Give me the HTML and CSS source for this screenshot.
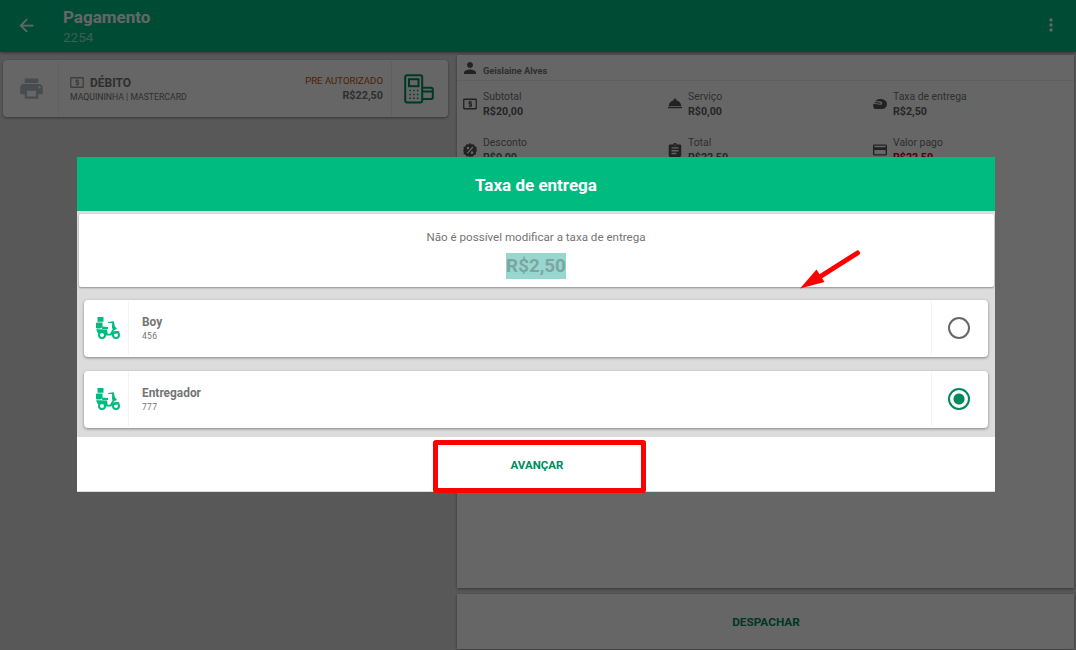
FILE: index.html
```html
<!DOCTYPE html>
<html lang="pt-BR">
<head>
	<meta charset="UTF-8">
	<title>Pagamento</title>
	<link rel="stylesheet" href="styles.css">
</head>
<body>
	<svg class="defs">
		<symbol id="money" viewBox="0 0 28 22">
			<rect x="1.5" y="1.5" width="25" height="19" rx="1" fill="none" stroke="currentColor" stroke-width="2.6"/>
			<path d="M17.5 7.2h-5v3.6h4.2v3.8h-5M14.3 4.6v3M14.3 14.4v3" fill="none" stroke="currentColor" stroke-width="2.6"/>
		</symbol>
		<symbol id="moto" viewBox="0 0 24 22">
			<path d="M1.500 0h6v4.800h-6zM.5 5.600h6v4.600L4 11.500H.5zM0 6h1v5H0zM6.500 9.500l5.500.6v1.800H6zM12.200 5l5.500-.8v1.600l-5.500.3zM16.200 4.500h1.800l.7 4.500 2.300 3-3.500 1.500-1.500-2.500z"/>
			<path d="M0 12.200h3l8 .3.7 4.300h2.300l2.500-4.500 1.500 1-2.500 5.200H9L7.500 15.500 2 16.500z"/>
			<circle cx="6" cy="18" r="3" fill="none" stroke="currentColor" stroke-width="2"/>
			<circle cx="20" cy="18" r="3" fill="none" stroke="currentColor" stroke-width="2"/>
			<path d="M15.800 17q2-4.500 8-2.500l-3.300 2.300z"/>
		</symbol>
	</svg>
	<div class="topo">
		<svg class="voltar" viewBox="0 0 24 24"><path d="M20 11H7.830l5.590-5.590L12 4l-8 8 8 8 1.410-1.410L7.830 13H20v-2z"/></svg>
		<div class="titulo">
			<h1>Pagamento</h1>
			<p>2254</p>
		</div>
		<svg class="menu" viewBox="0 0 24 24"><path d="M12 8c1.100 0 2-.9 2-2s-.9-2-2-2-2 .9-2 2 .9 2 2 2zm0 2c-1.100 0-2 .9-2 2s.9 2 2 2 2-.9 2-2-.9-2-2-2zm0 6c-1.100 0-2 .9-2 2s.9 2 2 2 2-.9 2-2-.9-2-2-2z"/></svg>
	</div>
	<div class="conteudo">
		<div class="esquerda">
			<div class="cartao pagamento">
				<div class="impressora">
					<svg viewBox="0 0 24 24"><path d="M19 8H5c-1.660 0-3 1.340-3 3v6h4v4h12v-4h4v-6c0-1.660-1.340-3-3-3zm-3 11H8v-5h8v5zm3-7c-.55 0-1-.45-1-1s.45-1 1-1 1 .45 1 1-.45 1-1 1zm-1-9H6v4h12V3z"/></svg>
				</div>
				<div class="forma">
					<h2><svg><use href="#money"/></svg>DÉBITO</h2>
					<p>MAQUININHA | MASTERCARD</p>
				</div>
				<div class="valor">
					<p>PRE AUTORIZADO</p>
					<b>R$22,50</b>
				</div>
				<div class="maquina">
					<svg viewBox="0 0 30 30">
						<rect x="1.200" y="1.200" width="17" height="27.400" rx="2"/>
						<rect x="5" y="5.200" width="9.500" height="7"/>
						<path d="M5.500 16.500h9M5.500 20.500h9M5.500 24.300h9" stroke-width="1.500" stroke-dasharray="1.500 2.200"/>
						<path d="M18 13.800h9q1.800 0 1.800 1.800v7.600q0 1.800-1.800 1.800h-9M18 17.500h11"/>
					</svg>
				</div>
			</div>
		</div>
		<div class="direita">
			<div class="painel">
				<div class="cliente">
					<svg viewBox="4 4 16 16"><path d="M12 12c2.210 0 4-1.790 4-4s-1.790-4-4-4-4 1.790-4 4 1.790 4 4 4zm0 2c-2.670 0-8 1.340-8 4v2h16v-2c0-2.660-5.330-4-8-4z"/></svg>
					<b>Geislaine Alves</b>
				</div>
				<div class="resumo">
					<div class="item">
						<svg class="nota"><use href="#money"/></svg>
						<div><p>Subtotal</p><b>R$20,00</b></div>
					</div>
					<div class="item">
						<svg viewBox="2 3 20 20"><path d="M2 17h20v2H2zm11.840-9.210c.1-.24.160-.51.160-.79 0-1.100-.9-2-2-2s-2 .9-2 2c0 .28.060.55.160.79C6.250 8.600 3.270 11.930 3 16h18c-.27-4.070-3.250-7.400-7.160-8.210z"/></svg>
						<div><p>Serviço</p><b>R$0,00</b></div>
					</div>
					<div class="item">
						<svg viewBox="1 1 22 22"><path d="M12 4c-3 0-5.500 1.300-6.800 3.500H11c2.500 0 4.500 1.300 4.500 3.300 0 1.500-1.200 2.500-2.800 2.500L1.500 11.500C1 15 1.500 17 2 18c.5 1.300 1.500 2 3 2h10c4.500 0 8-3.500 8-8s-4-8-11-8zM4.200 9l-.8 1.500 8.600 1.300c1.500.2 1.500-1.900-1-2.300z"/></svg>
						<div><p>Taxa de entrega</p><b>R$2,50</b></div>
					</div>
					<div class="item">
						<svg viewBox="0 0 24 24"><path fill-rule="evenodd" d="M12 0l3 2.400 3.800-.4 1.100 3.600L23.400 7l-.4 3.700 1 2.300-1.900 3 .1 3.600-3.600 1-1.600 2.900-3.600-.5L12 24l-2.700-1.300-3.600.6-1.400-3-3.400-1.200.5-3.500L0 13l1.500-2.500L1 7l3.400-1.400L5.500 2l3.600.4zM8.500 6.500a2.200 2.200 0 100 4.400 2.200 2.200 0 000-4.400zm7 7.800a2.200 2.200 0 100 4.400 2.200 2.200 0 000-4.400zM16 6L6.500 17 8 18.500 17.800 7.800z"/></svg>
						<div><p>Desconto</p><b>R$0,00</b></div>
					</div>
					<div class="item">
						<svg viewBox="2 1 20 20"><path d="M19 3h-4.180C14.400 1.840 13.300 1 12 1c-1.300 0-2.400.84-2.820 2H5c-1.100 0-2 .9-2 2v14c0 1.100.9 2 2 2h14c1.100 0 2-.9 2-2V5c0-1.100-.9-2-2-2zm-7 0c.55 0 1 .45 1 1s-.45 1-1 1-1-.45-1-1 .45-1 1-1zm2 14H7v-2h7v2zm3-4H7v-2h10v2zm0-4H7V7h10v2z"/></svg>
						<div><p>Total</p><b>R$22,50</b></div>
					</div>
					<div class="item pago">
						<svg viewBox="2 2 20 20"><path d="M20 4H4c-1.110 0-1.990.89-1.990 2L2 18c0 1.110.89 2 2 2h16c1.110 0 2-.89 2-2V6c0-1.110-.89-2-2-2zm0 14H4v-6h16v6zm0-10H4V6h16v2z"/></svg>
						<div><p>Valor pago</p><b>R$22,50</b></div>
					</div>
				</div>
			</div>
			<div class="despachar">DESPACHAR</div>
		</div>
	</div>

	<div class="fundo">
		<div class="modal">
			<div class="modal-topo">Taxa de entrega</div>
			<div class="aviso">
				<p>Não é possível modificar a taxa de entrega</p>
				<span>R$2,50</span>
			</div>
			<div class="lista">
				<div class="cartao entregador">
					<div class="moto"><svg><use href="#moto"/></svg></div>
					<div class="nome"><b>Boy</b><p>456</p></div>
					<div class="opcao"><i class="radio"></i></div>
				</div>
				<div class="cartao entregador">
					<div class="moto"><svg><use href="#moto"/></svg></div>
					<div class="nome"><b>Entregador</b><p>777</p></div>
					<div class="opcao"><i class="radio marcado"></i></div>
				</div>
			</div>
			<div class="avancar">AVANÇAR</div>
			<div class="destaque"></div>
			<svg class="seta" viewBox="0 0 60 40"><path d="M57.500 3L18 28" stroke="#f00" stroke-width="5" stroke-linecap="round"/><path d="M0 38.500L16.500 19.500 24.500 32z" fill="#f00"/></svg>
		</div>
	</div>
</body>
</html>
```

FILE: styles.css
```css
*{
	box-sizing: border-box;
	margin: 0;
	padding: 0;
}
body{
	width: 1076px;
	height: 650px;
	overflow: hidden;
	background: #dcdcdc;
	font-family: Roboto, "Liberation Sans", sans-serif;
	color: #757575;
	display: flex;
	flex-direction: column;
}
svg{
	display: block;
	fill: currentColor;
	flex: none;
}
b,h1,h2{
	font-weight: 700;
}
.defs{
	display: none;
}
/* barra do topo */
.topo{
	height: 52px;
	flex: none;
	background: #00bb80;
	color: white;
	display: flex;
	align-items: center;
	padding: 0 15px 2px 16px;
	box-shadow: 0 1px 3px rgba(0,0,0,.4);
}
.voltar{
	width: 21px;
	height: 21px;
}
.titulo{
	flex: 1;
	margin-left: 26px;
	padding-top: 4px;
}
.titulo h1{
	font-size: 17px;
	line-height: 20px;
}
.titulo p{
	font-size: 13.500px;
	line-height: 21px;
	opacity: .6;
}
.menu{
	width: 20px;
	height: 20px;
}
.conteudo{
	flex: 1;
	display: flex;
}
.esquerda{
	width: 457px;
	padding: 8px 9px 0 3px;
}
.cartao{
	height: 57px;
	background: white;
	border-radius: 4px;
	box-shadow: 0 1px 3px rgba(0,0,0,.4);
	display: flex;
	align-items: center;
}
.impressora{
	width: 56px;
	height: 55px;
	border-right: 1px solid #f0f0f0;
	display: flex;
	align-items: center;
	justify-content: center;
	padding-left: 1px;
	color: #b0bec5;
}
.impressora svg{
	width: 27px;
	height: 27px;
}
.forma{
	flex: 1;
	padding: 1px 0 0 11px;
}
.forma h2{
	display: flex;
	align-items: center;
	gap: 6px;
	font-size: 12px;
	line-height: 16px;
}
.forma h2 svg{
	width: 14px;
	height: 11px;
	color: #999;
}
.forma p{
	font-size: 8.700px;
	line-height: 13px;
}
.valor{
	text-align: right;
	padding-right: 8px;
	font-size: 9.600px;
	line-height: 15px;
}
.valor p{
	margin-top: -1px;
	color: #c8500a;
}
.valor b{
	display: block;
	font-size: 10.800px;
}
.maquina{
	width: 57px;
	height: 55px;
	border-left: 1px solid #f0f0f0;
	display: flex;
	align-items: center;
	padding-left: 12px;
	color: #008a5c;
}
.maquina svg{
	width: 30px;
	height: 30px;
	fill: none;
	stroke: currentColor;
	stroke-width: 2;
}
.direita{
	width: 617px;
	padding-top: 3px;
	display: flex;
	flex-direction: column;
	gap: 6px;
}
.painel,.despachar{
	background: white;
	box-shadow: 0 1px 3px rgba(0,0,0,.4);
}
.painel{
	height: 533px;
}
.cliente{
	height: 26px;
	border-bottom: 1px solid #eee;
	display: flex;
	gap: 7px;
	padding: 6px 0 0 7px;
	font-size: 9.300px;
	line-height: 20px;
}
.cliente svg{
	width: 12px;
	height: 12px;
	margin-top: 1px;
	color: #555;
}
.resumo{
	display: grid;
	grid-template-columns: 205px 205px 205px;
	grid-auto-rows: 46px;
	padding: 9px 0 0 6px;
}
.item{
	display: flex;
	gap: 6px;
	font-size: 10.400px;
	line-height: 14.600px;
}
.item svg{
	width: 14px;
	height: 14px;
	margin-top: 7px;
	color: #555;
}
.item .nota{
	height: 12px;
	margin-top: 8px;
}
.item b{
	color: #606060;
	font-size: 10.700px;
}
.item.pago b{
	color: #c00010;
}
.despachar{
	height: 55px;
	padding-left: 1px;
	text-align: center;
	font-size: 11.800px;
	font-weight: 700;
	line-height: 56px;
	color: #008a5c;
}
/* modal */
.fundo{
	position: fixed;
	top: 0;
	left: 0;
	width: 1076px;
	height: 650px;
	padding: 157px 0 0 77px;
	background: rgba(0,0,0,.6);
}
.modal{
	position: relative;
	width: 918px;
	height: 335px;
	background: #dcdcdc;
}
.modal-topo{
	height: 54px;
	background: #00bb80;
	color: white;
	font-size: 17px;
	font-weight: 700;
	line-height: 57px;
	text-align: center;
}
.aviso{
	height: 73px;
	margin: 2.500px 1.500px 0;
	padding-top: 15px;
	background: white;
	border-radius: 2px;
	box-shadow: 0 1px 2px rgba(0,0,0,.35);
	text-align: center;
	font-size: 11.600px;
}
.aviso p{
	line-height: 16px;
}
.aviso span{
	display: inline-block;
	margin-top: 8px;
	background: #99d6cf;
	color: #7aa6a1;
	font-size: 18.800px;
	font-weight: 700;
	line-height: 26px;
}
.lista{
	height: 150.500px;
	padding: 13px 7px 0;
	display: flex;
	flex-direction: column;
	gap: 14px;
}
.moto{
	width: 45px;
	height: 54px;
	border-right: 1px solid #f3f3f3;
	display: flex;
	align-items: center;
	padding-left: 11.500px;
	color: #00bb80;
}
.moto svg{
	width: 24px;
	height: 22px;
}
.nome{
	flex: 1;
	padding: 1px 0 0 13px;
	font-size: 11.900px;
	line-height: 15px;
}
.nome p{
	font-size: 8.500px;
	line-height: 12px;
	letter-spacing: .3px;
}
.opcao{
	width: 57px;
	height: 54px;
	border-left: 1px solid #f3f3f3;
	display: flex;
	align-items: center;
	padding-left: 16px;
}
.radio{
	width: 22px;
	height: 22px;
	border: 2px solid #686868;
	border-radius: 50%;
}
.marcado{
	border-color: #008a5c;
	background: radial-gradient(circle, #008a5c 5px, white 6px);
}
.avancar{
	height: 54px;
	padding-left: 2px;
	background: white;
	color: #008a5c;
	font-size: 11.500px;
	font-weight: 700;
	line-height: 56px;
	text-align: center;
}
/* marcações sobre a tela */
.destaque{
	position: absolute;
	left: 356px;
	top: 283px;
	width: 213px;
	height: 53px;
	border: 5px solid #f00;
	border-radius: 3px;
}
.seta{
	position: absolute;
	left: 723px;
	top: 93px;
	width: 60px;
	height: 40px;
}
```
